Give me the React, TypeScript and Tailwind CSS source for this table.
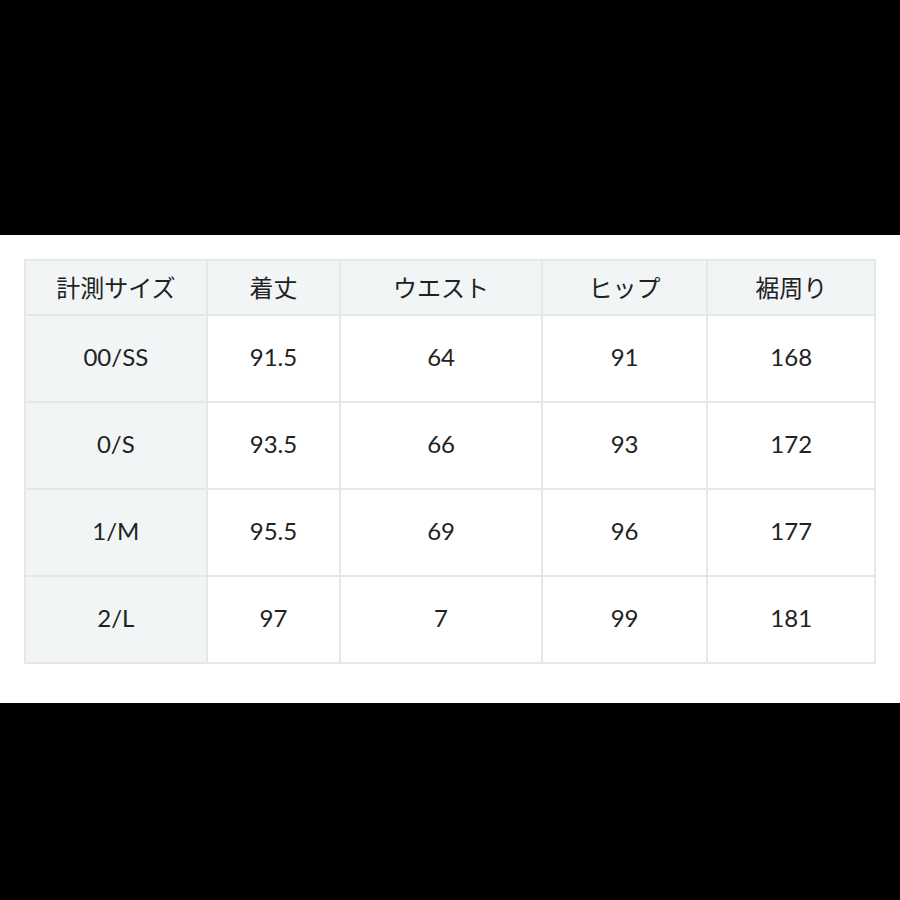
const headers = ["計測サイズ", "着丈", "ウエスト", "ヒップ", "裾周り"];
const rows = [
  ["00/SS", "91.5", "64", "91", "168"],
  ["0/S", "93.5", "66", "93", "172"],
  ["1/M", "95.5", "69", "96", "177"],
  ["2/L", "97", "7", "99", "181"],
];
const widths = ["w-[182px]", "w-[134px]", "w-[202px]", "w-[166px]", "w-[168px]"];

export default function App() {
  return (
    <div className="w-[900px] h-[900px] bg-black flex flex-col" style={{ fontFamily: 'Lato, "Noto Sans CJK JP", sans-serif' }}>
      <div className="h-[235px]" />
      <div className="h-[468px] bg-white px-[24px] pt-[24px]">
        <table className="border-collapse text-[24px] text-[#222]">
          <thead>
            <tr className="h-[55px] bg-[#f1f5f6]">
              {headers.map((h, i) => (
                <th key={h} className={`${widths[i]} border-2 border-[#e5e8e9] font-normal text-center`}>
                  {h}
                </th>
              ))}
            </tr>
          </thead>
          <tbody>
            {rows.map((r) => (
              <tr key={r[0]} className="h-[87px]">
                {r.map((c, i) => (
                  <td
                    key={i}
                    className={`border-2 border-[#e5e8e9] text-center pb-[4px] ${i === 0 ? "bg-[#f1f5f6]" : "bg-white"}`}
                  >
                    {c}
                  </td>
                ))}
              </tr>
            ))}
          </tbody>
        </table>
      </div>
      <div className="flex-1" />
    </div>
  );
}
